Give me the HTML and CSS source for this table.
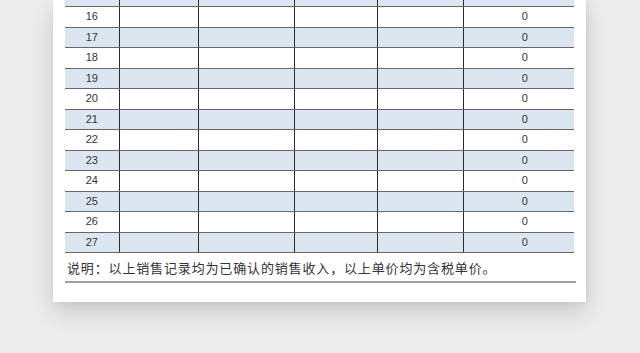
FILE: index.html
```html
<!DOCTYPE html>
<html>
<head>
<meta charset="utf-8">
<link rel="stylesheet" href="styles.css">
</head>
<body>
<div class="paper">
  <table class="sheet">
    <colgroup>
      <col class="c1"><col class="c2"><col class="c3"><col class="c4"><col class="c5"><col class="c6">
    </colgroup>
    <tbody>
      <tr class="cut blue"><td></td><td></td><td></td><td></td><td></td><td></td></tr>
      <tr><td class="n">16</td><td></td><td></td><td></td><td></td><td class="z">0</td></tr>
      <tr class="blue"><td class="n">17</td><td></td><td></td><td></td><td></td><td class="z">0</td></tr>
      <tr><td class="n">18</td><td></td><td></td><td></td><td></td><td class="z">0</td></tr>
      <tr class="blue"><td class="n">19</td><td></td><td></td><td></td><td></td><td class="z">0</td></tr>
      <tr><td class="n">20</td><td></td><td></td><td></td><td></td><td class="z">0</td></tr>
      <tr class="blue"><td class="n">21</td><td></td><td></td><td></td><td></td><td class="z">0</td></tr>
      <tr><td class="n">22</td><td></td><td></td><td></td><td></td><td class="z">0</td></tr>
      <tr class="blue"><td class="n">23</td><td></td><td></td><td></td><td></td><td class="z">0</td></tr>
      <tr><td class="n">24</td><td></td><td></td><td></td><td></td><td class="z">0</td></tr>
      <tr class="blue"><td class="n">25</td><td></td><td></td><td></td><td></td><td class="z">0</td></tr>
      <tr><td class="n">26</td><td></td><td></td><td></td><td></td><td class="z">0</td></tr>
      <tr class="blue"><td class="n">27</td><td></td><td></td><td></td><td></td><td class="z">0</td></tr>
    </tbody>
  </table>
  <div class="note">说明：以上销售记录均为已确认的销售收入，以上单价均为含税单价。</div>
</div>
</body>
</html>
```
FILE: styles.css
```css
html, body {
  margin: 0;
  padding: 0;
  background: #ededed;
  width: 640px;
  height: 353px;
  overflow: hidden;
}
.paper {
  margin-left: 53px;
  width: 533px;
  height: 302px;
  background: #fff;
  box-sizing: border-box;
  padding-left: 12px;
  box-shadow: 0 10px 22px rgba(0, 0, 0, 0.16), 2px 0 6px rgba(0, 0, 0, 0.06);
}
.sheet {
  border-collapse: collapse;
  table-layout: fixed;
  width: 509px;
  font-family: "Liberation Sans", "DejaVu Sans", sans-serif;
  font-size: 11px;
  color: #333;
}
.c1 { width: 54px; }
.c2 { width: 79px; }
.c3 { width: 96px; }
.c4 { width: 83px; }
.c5 { width: 86px; }
.c6 { width: 111px; }
.sheet td {
  padding: 0;
  height: 19.5px;
  border-bottom: 1px solid #666;
  border-right: 1px solid #2a2a2a;
  text-align: center;
  line-height: 19px;
}
.sheet td:last-child {
  border-right: none;
}
.sheet tr.cut td {
  height: 6px;
  line-height: 6px;
}
.sheet tr.blue td {
  background: #dce6f1;
}
.sheet td.z {
  padding-left: 12px;
}
.note {
  width: 509px;
  height: 28px;
  border-bottom: 2px solid #a0a0a0;
  font-family: "Noto Sans CJK SC", sans-serif;
  font-size: 13px;
  letter-spacing: 0.85px;
  color: #333;
  line-height: 30px;
  padding-left: 2px;
  box-sizing: content-box;
}
```
